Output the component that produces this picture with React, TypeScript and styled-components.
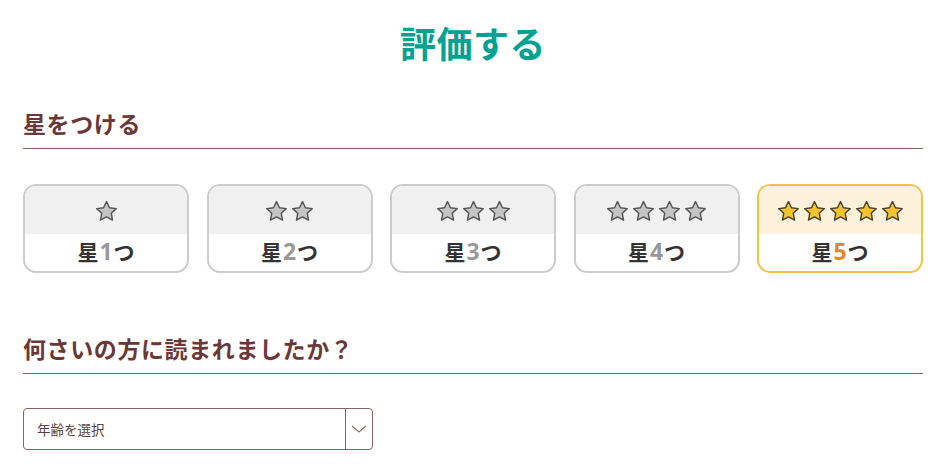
import React from "react";
import styled, { createGlobalStyle } from "styled-components";

const GlobalStyle = createGlobalStyle`
  body {
    margin: 0;
    background: #fff;
    font-family: "Noto Sans CJK JP", "Noto Sans", sans-serif;
  }
`;

const Page = styled.div`
  width: 900px;
  padding: 17px 22px 0 23px;
`;

const Title = styled.h1`
  margin: 0;
  text-align: center;
  font-size: 36px;
  line-height: 50px;
  font-weight: 700;
  color: #00a391;
  letter-spacing: 0.5px;
`;

const Heading = styled.h2<{ $top: number }>`
  margin: ${(p) => p.$top}px 0 0;
  padding-bottom: 10px;
  font-size: 23px;
  line-height: 30px;
  font-weight: 700;
  color: #6b3838;
  letter-spacing: 0.6px;
  border-bottom: 1px solid #8a6262;
`;

const CardGrid = styled.div`
  display: grid;
  grid-template-columns: repeat(5, 1fr);
  gap: 17.5px;
  margin-top: 35px;
`;

const Card = styled.div<{ $active?: boolean }>`
  height: 85px;
  border: 2px solid ${(p) => (p.$active ? "#f2c443" : "#cccccc")};
  border-radius: 13px;
  overflow: hidden;
  display: flex;
  flex-direction: column;
  background: #fff;
`;

const StarRow = styled.div<{ $active?: boolean }>`
  height: 48px;
  background: ${(p) => (p.$active ? "#fcf2dc" : "#f0f0f0")};
  display: flex;
  align-items: center;
  justify-content: center;
  gap: 3px;
  padding-top: 2px;
  box-sizing: border-box;
`;

const Label = styled.div`
  flex: 1;
  display: flex;
  align-items: center;
  justify-content: center;
  font-size: 21px;
  font-weight: 700;
  color: #333;
  padding-bottom: 3px;
`;

const Num = styled.span<{ $active?: boolean }>`
  color: ${(p) => (p.$active ? "#e8862a" : "#999999")};
  font-family: "Noto Sans", sans-serif;
  font-size: 23px;
  margin: 0 1px;
`;

const SelectBox = styled.div`
  margin-top: 34px;
  width: 348px;
  height: 40px;
  border: 1px solid #8a6262;
  border-radius: 4px;
  display: flex;
  align-items: stretch;
`;

const SelectText = styled.div`
  flex: 1;
  display: flex;
  align-items: center;
  padding-left: 13px;
  font-size: 13.5px;
  color: #5a4242;
`;

const Chevron = styled.div`
  width: 26px;
  border-left: 1px solid #8a6262;
  display: flex;
  align-items: center;
  justify-content: center;
`;

function Star({ gold }: { gold?: boolean }) {
  return (
    <svg width="23" height="22" viewBox="0 0 24 23">
      <path
        d="M12 1.6l3.1 6.5 7.1.9-5.2 4.9 1.3 7.1L12 17.6 5.7 21l1.3-7.1L1.8 9l7.1-.9z"
        fill={gold ? "#f3c22f" : "#c4c4c4"}
        stroke={gold ? "#4a4030" : "#555"}
        strokeWidth="1.5"
        strokeLinejoin="round"
      />
    </svg>
  );
}

export default function App() {
  const counts = [1, 2, 3, 4, 5];
  return (
    <>
      <GlobalStyle />
      <Page>
        <Title>評価する</Title>
        <Heading $top={41}>星をつける</Heading>
        <CardGrid>
          {counts.map((n) => {
            const active = n === 5;
            return (
              <Card key={n} $active={active}>
                <StarRow $active={active}>
                  {Array.from({ length: n }).map((_, i) => (
                    <Star key={i} gold={active} />
                  ))}
                </StarRow>
                <Label>
                  星<Num $active={active}>{n}</Num>つ
                </Label>
              </Card>
            );
          })}
        </CardGrid>
        <Heading $top={60}>何さいの方に読まれましたか？</Heading>
        <SelectBox>
          <SelectText>年齢を選択</SelectText>
          <Chevron>
            <svg width="16" height="10" viewBox="0 0 16 10">
              <path d="M1 2l7 6 7-6" fill="none" stroke="#8a7070" strokeWidth="1.2" />
            </svg>
          </Chevron>
        </SelectBox>
      </Page>
    </>
  );
}
